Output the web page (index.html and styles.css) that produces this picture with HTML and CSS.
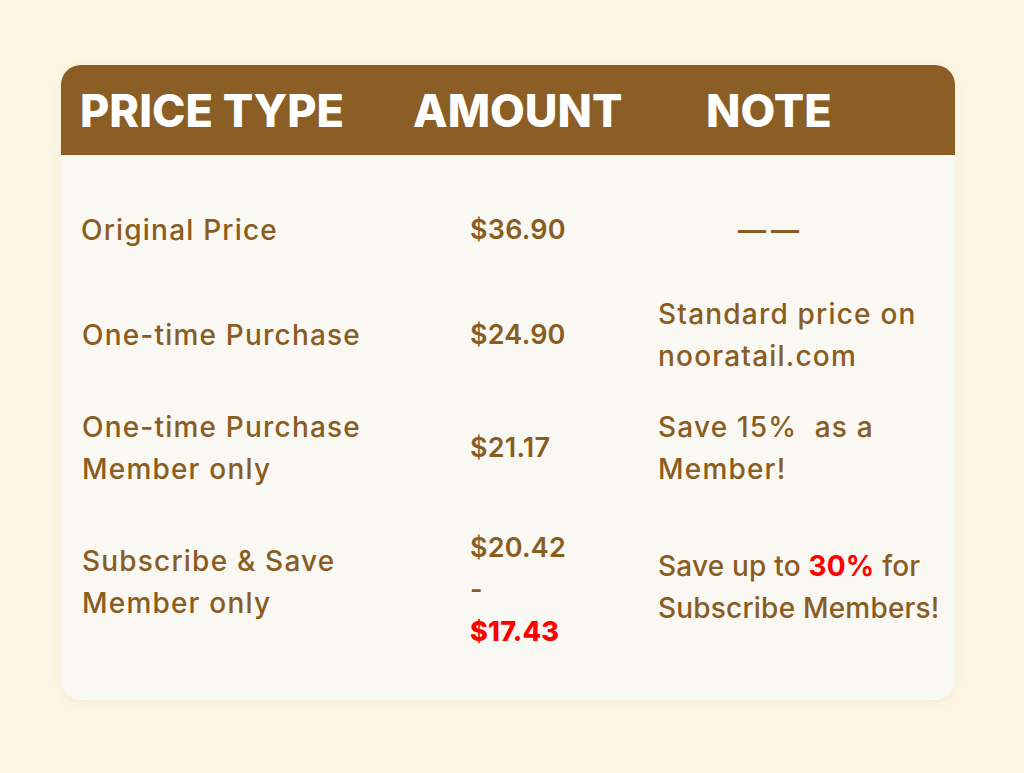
FILE: index.html
```html
<!DOCTYPE html>
<html lang="en">
<head>
<meta charset="utf-8">
<title>Price Table</title>
<link rel="stylesheet" href="styles.css">
</head>
<body>
<div class="card">
  <div class="head">
    <div class="h h1">PRICE TYPE</div>
    <div class="h h2">AMOUNT</div>
    <div class="h h3">NOTE</div>
  </div>
  <div class="body">
    <div class="cell c1">Original Price</div>
    <div class="cell c2">$36.90</div>
    <div class="cell c3"><span class="dash">——</span></div>

    <div class="cell c1 pad">One-time Purchase</div>
    <div class="cell c2">$24.90</div>
    <div class="cell c3">Standard price on<br>nooratail.com</div>

    <div class="cell c1 pad">One-time Purchase<br>Member only</div>
    <div class="cell c2">$21.17</div>
    <div class="cell c3">Save 15%&nbsp; as a<br>Member!</div>

    <div class="cell c1 pad up8">Subscribe &amp; Save<br>Member only</div>
    <div class="cell c2">$20.42<br>-<br><span class="red heavy">$17.43</span></div>
    <div class="cell c3 up3 tight">Save up to <span class="red bold">30%</span> for<br>Subscribe Members!</div>
  </div>
</div>
</body>
</html>
```

FILE: styles.css
```css
* { box-sizing: border-box; }
html, body { margin: 0; padding: 0; }
body {
  background: #fdf6e3;
  width: 1024px;
  height: 773px;
  font-family: Inter, "Noto Sans", sans-serif;
  color: #8a5c22;
}
.card {
  margin: 65px 0 0 61px;
  width: 894px;
  height: 635px;
  border-radius: 20px;
  background: #f9f8f3;
  overflow: hidden;
  box-shadow: 0 2px 10px rgba(120, 90, 30, 0.08);
}
.head {
  height: 90px;
  background: #8a5e25;
  display: grid;
  grid-template-columns: 352px 293px 1fr;
  align-items: center;
}
.h {
  color: #ffffff;
  font-weight: 800;
  font-size: 45px;
  letter-spacing: 0;
  white-space: nowrap;
}
.h1 { padding-left: 19px; }
.body {
  padding: 35px 0 16px;
  display: grid;
  grid-template-columns: 389px 188px 1fr;
  grid-template-rows: 80px 130px 96px 188px;
  align-items: center;
}
.cell {
  font-size: 28px;
  line-height: 42px;
  font-weight: 500;
  letter-spacing: 1.2px;
  white-space: nowrap;
  padding-left: 20px;
}
.c1.pad { padding-left: 21px; }
.c2 { font-weight: 600; padding-left: 20px; letter-spacing: 0.2px; font-size: 27px; }
.c3 { padding-left: 20px; }
.c3.tight { letter-spacing: 0.2px; }
.up8 { padding-bottom: 16px; }
.up3 { padding-bottom: 6px; }
.dash { padding-left: 80px; letter-spacing: 5px; font-weight: 600; }
.red { color: #ff0000; }
.bold { font-weight: 700; }
.heavy { font-weight: 800; }
```
